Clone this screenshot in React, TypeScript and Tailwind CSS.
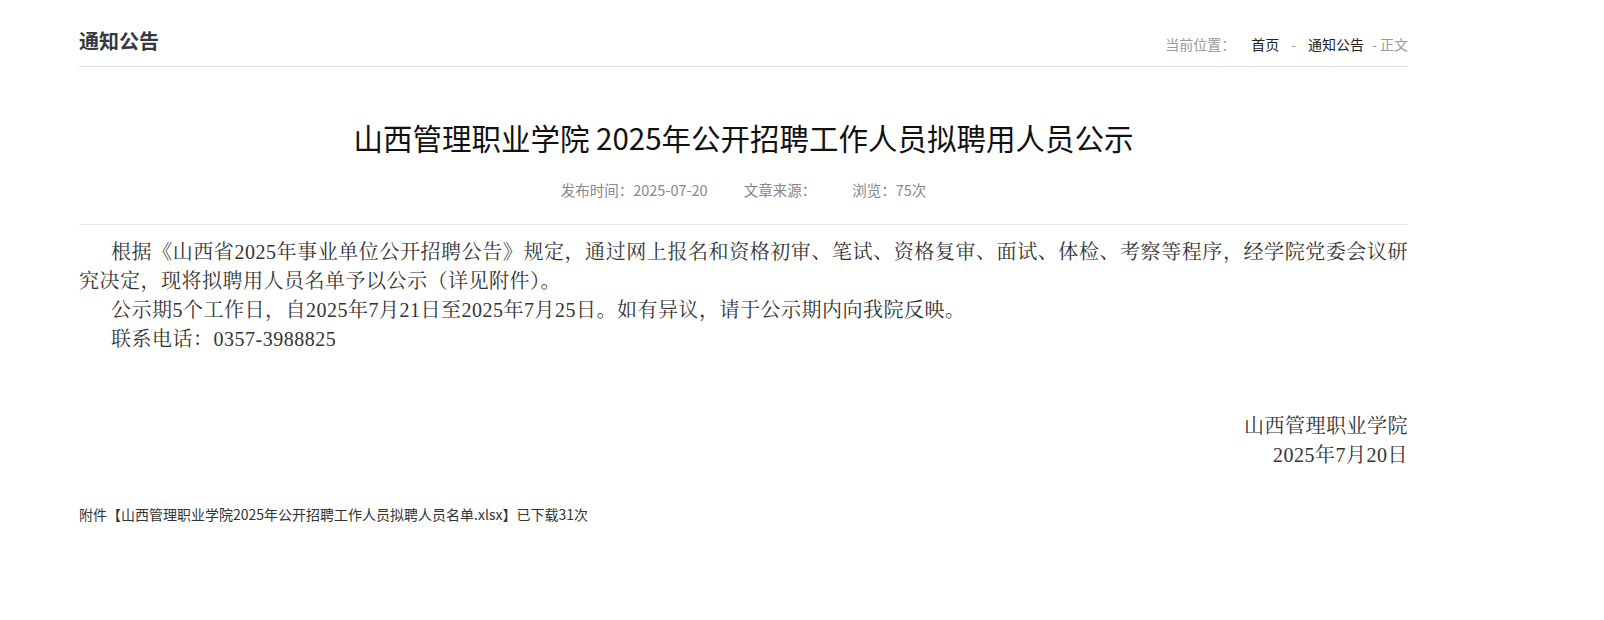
import React from 'react'

const sans = { fontFamily: '"Noto Sans CJK SC", "Liberation Sans", sans-serif' }

const bodyFont = 'font-["Liberation_Serif","Noto_Serif_CJK_SC","Noto_Sans_CJK_SC",serif]'

function Breadcrumb() {
  return (
    <div className="flex items-center text-[14px] leading-[20px] text-[#999]">
      <span>当前位置：</span>
      <a className="ml-[16px] text-[#222]">首页</a>
      <span className="mx-[12px]">-</span>
      <a className="text-[#222]">通知公告</a>
      <span className="ml-[8px]">- 正文</span>
    </div>
  )
}

export default function App() {
  return (
    <div className="min-h-screen bg-white font-['Noto_Sans_CJK_SC','Liberation_Sans',sans-serif]">
      <div className="ml-[79px] w-[1329px] pt-[28px]">
        {/* header */}
        <div className="flex items-end justify-between border-b border-[#dcdcdc] pb-[12px]">
          <h2 className="text-[20px] font-bold leading-[26px] text-[#333a42]">通知公告</h2>
          <Breadcrumb />
        </div>

        {/* article */}
        <div className="mt-[50px] text-center">
          <h1 className="text-[29.5px] leading-[40px] text-[#111]">
            山西管理职业学院 2025年公开招聘工作人员拟聘用人员公示
          </h1>
          <div className="mt-[23px] flex justify-center gap-[36px] text-[14.5px] leading-[20px] text-[#888]">
            <span>发布时间：2025-07-20</span>
            <span>文章来源：</span>
            <span>浏览：75次</span>
          </div>
        </div>

        <div className="mt-[24px] border-t border-[#eaeaea] pt-[13px]">
          <div className={`${bodyFont} text-[20px] leading-[29px] tracking-[0.5px] text-[#333]`}>
            <p className="indent-[32px] text-justify">
              根据《山西省2025年事业单位公开招聘公告》规定，通过网上报名和资格初审、笔试、资格复审、面试、体检、考察等程序，经学院党委会议研究决定，现将拟聘用人员名单予以公示（详见附件）。
            </p>
            <p className="indent-[32px]">公示期5个工作日，自2025年7月21日至2025年7月25日。如有异议，请于公示期内向我院反映。</p>
            <p className="indent-[32px]">联系电话：0357-3988825</p>
            <p>&nbsp;</p>
            <p>&nbsp;</p>
            <p className="text-right">山西管理职业学院</p>
            <p className="text-right">2025年7月20日</p>
          </div>

          <div className="mt-[34px] text-[14px] leading-[20px] text-[#333]" style={sans}>
            附件【山西管理职业学院2025年公开招聘工作人员拟聘人员名单.xlsx】已下载31次
          </div>
        </div>
      </div>
    </div>
  )
}
